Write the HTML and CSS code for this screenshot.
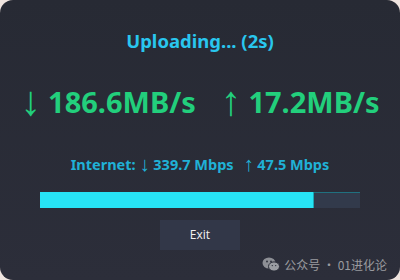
FILE: index.html
```html
<!DOCTYPE html>
<html>
<head>
<meta charset="utf-8">
<link rel="stylesheet" href="styles.css">
</head>
<body>
<div class="panel">
  <div class="title">Uploading... (2s)</div>
  <div class="speeds">
    <span class="speed"><span class="arrow">↓</span>186.6MB/s</span>
    <span class="speed"><span class="arrow">↑</span>17.2MB/s</span>
  </div>
  <div class="internet">Internet: <span class="sarrow">↓</span> 339.7 Mbps <span class="gap"></span><span class="sarrow">↑</span> 47.5 Mbps</div>
  <div class="bar"><div class="fill" style="width:85.6%"></div></div>
  <div class="btn">Exit</div>
  <div class="mark">
    <svg class="wx" width="18" height="15" viewBox="0 0 18 15">
      <ellipse cx="7" cy="6" rx="6.5" ry="5.5" fill="#8d8f95"/>
      <ellipse cx="12" cy="9.5" rx="5.5" ry="4.6" fill="#9a9ca2" stroke="#2a2d38" stroke-width="1"/>
      <circle cx="5" cy="4.5" r="0.9" fill="#2a2d38"/>
      <circle cx="9" cy="4.5" r="0.9" fill="#2a2d38"/>
      <circle cx="10.3" cy="8.6" r="0.7" fill="#2a2d38"/>
      <circle cx="13.7" cy="8.6" r="0.7" fill="#2a2d38"/>
    </svg>
    <span>公众号 · 01进化论</span>
  </div>
</div>
</body>
</html>
```
FILE: styles.css
```css
html, body {
  margin: 0;
  padding: 0;
  background: #efe4df;
}
.panel {
  width: 400px;
  height: 280px;
  box-sizing: border-box;
  border-radius: 13px;
  background: linear-gradient(#272a34, #2c2e3a);
  display: flex;
  flex-direction: column;
  align-items: center;
  font-family: "Noto Sans", "Open Sans", sans-serif;
  position: relative;
  padding-top: 27px;
}
.title {
  color: #29c6ee;
  font-weight: 700;
  font-size: 18.5px;
  line-height: 28px;
}
.speeds {
  margin-top: 28px;
  display: flex;
  gap: 25px;
  color: #22cf7c;
  font-weight: 700;
  font-size: 29px;
  line-height: 38px;
}
.arrow {
  font-family: "Liberation Sans", sans-serif;
  font-weight: 400;
  font-size: 1.42em;
  line-height: 0;
  margin-right: 7px;
  vertical-align: -2px;
}
.internet {
  margin-top: 33px;
  color: #20b1d6;
  font-weight: 700;
  font-size: 14.5px;
  line-height: 20px;
  white-space: pre;
}
.sarrow {
  font-family: "Liberation Sans", sans-serif;
  font-weight: 400;
  font-size: 1.4em;
  line-height: 0;
  vertical-align: -1px;
}
.gap {
  display: inline-block;
  width: 6px;
}
.bar {
  margin-top: 18px;
  width: 320px;
  height: 16px;
  box-sizing: border-box;
  background: #323a4b;
  border-top: 1px solid #20707f;
  display: flex;
}
.fill {
  margin-top: -1px;
  height: 16px;
  box-sizing: border-box;
  background: #27e4f5;
  border-right: 1px solid #1aa6b4;
}
.btn {
  margin-top: 12px;
  width: 80px;
  height: 30px;
  background: #323748;
  color: #f2f2f2;
  font-family: "Open Sans", "Noto Sans", sans-serif;
  font-size: 12px;
  line-height: 30px;
  text-align: center;
}
.mark {
  position: absolute;
  right: 13px;
  bottom: 7px;
  display: flex;
  align-items: center;
  gap: 4px;
  color: #9a9b9f;
  font-family: "Noto Sans CJK SC", sans-serif;
  font-size: 12px;
}
```
